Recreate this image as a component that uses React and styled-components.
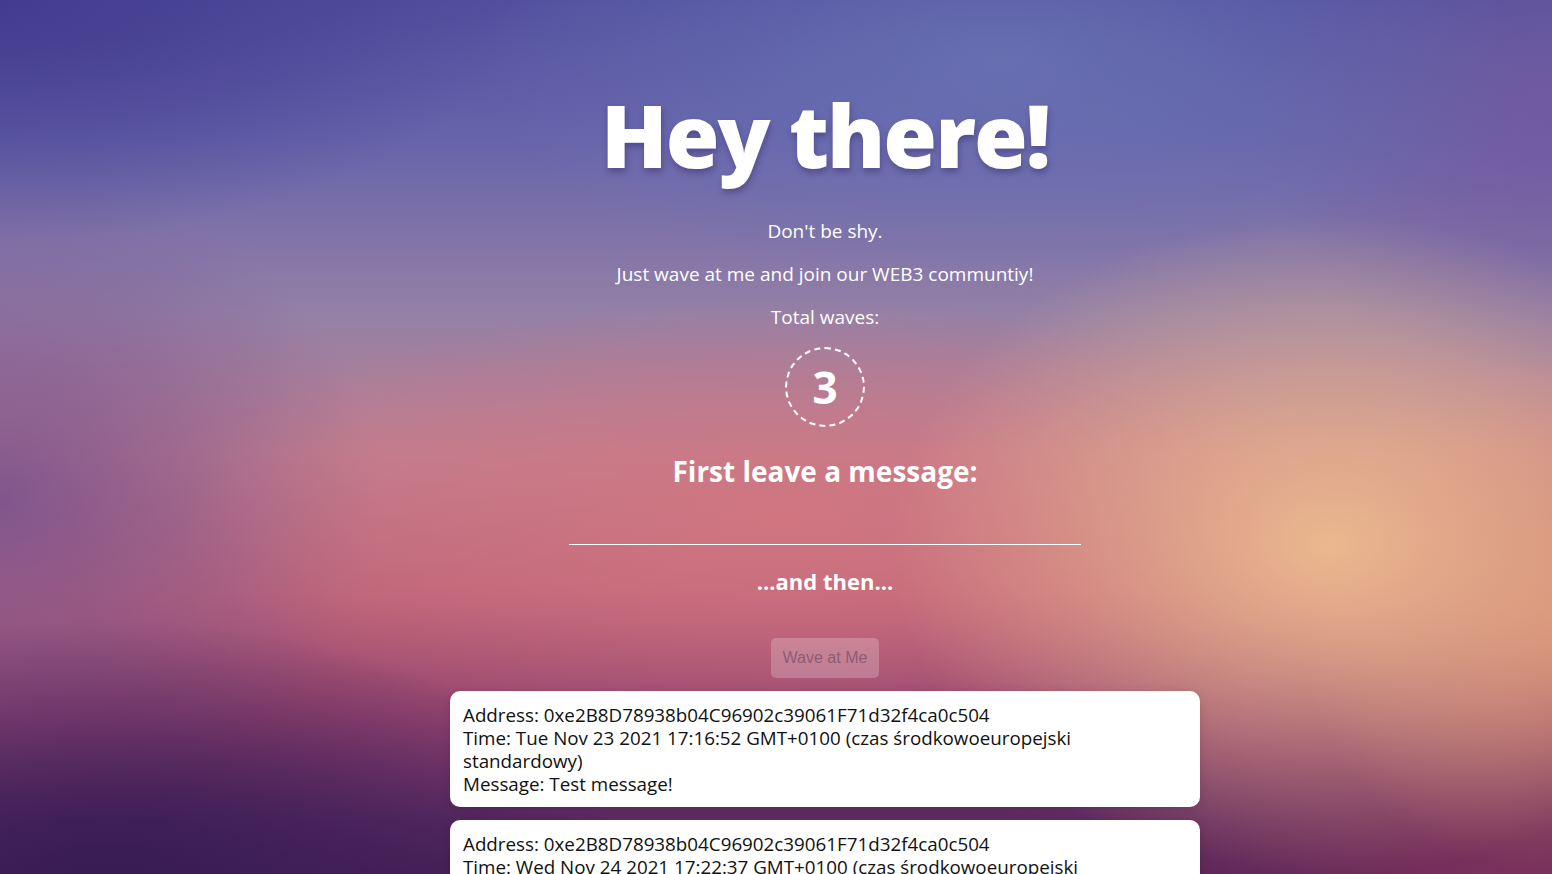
import React, { useState } from "react";
import styled, { createGlobalStyle } from "styled-components";

const GlobalStyle = createGlobalStyle`
  html, body {
    margin: 0;
    padding: 0;
    height: 100%;
  }
  body {
    font-family: "Open Sans", "Noto Sans", sans-serif;
    overflow: hidden;
  }
`;

const waves = [
  {
    address: "0xe2B8D78938b04C96902c39061F71d32f4ca0c504",
    time: "Tue Nov 23 2021 17:16:52 GMT+0100 (czas środkowoeuropejski standardowy)",
    message: "Test message!",
  },
  {
    address: "0xe2B8D78938b04C96902c39061F71d32f4ca0c504",
    time: "Wed Nov 24 2021 17:22:37 GMT+0100 (czas środkowoeuropejski standardowy)",
    message: "Hello!",
  },
];

const App = () => {
  const [message, setMessage] = useState("");

  return (
    <Page>
      <GlobalStyle />
      <Main>
        <Header>Hey there!</Header>
        <Bio>Don't be shy.</Bio>
        <Bio>Just wave at me and join our WEB3 communtiy!</Bio>
        <Bio>Total waves:</Bio>
        <Counter>3</Counter>
        <SubHeader>First leave a message:</SubHeader>
        <MessageInput
          type="text"
          value={message}
          onChange={(e) => setMessage(e.target.value)}
        />
        <Then>...and then...</Then>
        <WaveButton type="button" disabled={!message}>
          Wave at Me
        </WaveButton>
        {waves.map((wave, i) => (
          <Card key={i}>
            <div>Address: {wave.address}</div>
            <div>Time: {wave.time}</div>
            <div>Message: {wave.message}</div>
          </Card>
        ))}
      </Main>
    </Page>
  );
};

// blurred sunset photo, rebuilt from soft gradient layers
const Page = styled.div`
  width: 100%;
  height: 874px;
  overflow: hidden;
  background:
    radial-gradient(ellipse 440px 330px at 1330px 545px, rgba(234, 184, 142, 1), rgba(234, 184, 142, 0) 100%),
    radial-gradient(ellipse 260px 260px at 1560px 620px, rgba(214, 140, 110, 0.8), rgba(214, 140, 110, 0) 100%),
    radial-gradient(ellipse 520px 260px at 110px 880px, rgba(56, 28, 84, 1), rgba(56, 28, 84, 0) 100%),
    radial-gradient(ellipse 520px 240px at 1500px 880px, rgba(128, 50, 92, 0.9), rgba(128, 50, 92, 0) 100%),
    radial-gradient(ellipse 520px 240px at 0px 0px, rgba(66, 58, 142, 0.95), rgba(66, 58, 142, 0) 100%),
    radial-gradient(ellipse 520px 230px at 1000px 60px, rgba(106, 116, 180, 0.8), rgba(106, 116, 180, 0) 100%),
    radial-gradient(ellipse 300px 260px at 1552px 120px, rgba(116, 90, 158, 0.8), rgba(116, 90, 158, 0) 100%),
    radial-gradient(ellipse 600px 220px at 780px 520px, rgba(212, 118, 128, 0.8), rgba(212, 118, 128, 0) 100%),
    radial-gradient(ellipse 380px 320px at 0px 500px, rgba(118, 80, 142, 0.85), rgba(118, 80, 142, 0) 100%),
    linear-gradient(180deg, #52509e 0%, #6764ab 16%, #9580a6 36%, #c07e8e 52%, #bd6479 68%, #93436f 82%, #5a2a62 94%, #4a2258 100%);
`;

const Main = styled.main`
  display: flex;
  flex-direction: column;
  align-items: center;
  padding: 80px 0 0 98px;
  color: #fff;
`;

const Header = styled.h1`
  margin: 0;
  font-family: "Open Sans", sans-serif;
  font-weight: 800;
  font-size: 87px;
  line-height: 108px;
  letter-spacing: -2px;
  text-shadow: 1px 4px 6px rgba(40, 20, 80, 0.35);
`;

const Bio = styled.p`
  margin: 31px 0 0;
  font-size: 19px;
  line-height: 24px;
  & + & {
    margin-top: 19px;
  }
`;

const Counter = styled.div`
  display: flex;
  align-items: center;
  justify-content: center;
  box-sizing: border-box;
  width: 80px;
  height: 80px;
  margin-top: 18px;
  border: 2px dashed #fff;
  border-radius: 50%;
  font-size: 44px;
  font-weight: 700;
`;

const SubHeader = styled.h2`
  margin: 24px 0 0;
  font-size: 28px;
  font-weight: 700;
  line-height: 40px;
`;

const MessageInput = styled.input`
  box-sizing: border-box;
  width: 512px;
  height: 40px;
  margin-top: 14px;
  border: none;
  border-bottom: 1px solid #fff;
  background: transparent;
  color: #fff;
  font-family: inherit;
  font-size: 18px;
  outline: none;
`;

const Then = styled.h3`
  margin: 20px 0 0;
  font-size: 22px;
  font-weight: 700;
  line-height: 32px;
`;

const WaveButton = styled.button`
  width: 108px;
  height: 40px;
  margin-top: 41px;
  border: none;
  border-radius: 5px;
  background: rgba(255, 255, 255, 0.22);
  color: rgba(90, 60, 90, 0.55);
  font-family: "Liberation Sans", Arial, sans-serif;
  font-size: 16px;
`;

const Card = styled.div`
  box-sizing: border-box;
  width: 750px;
  margin-top: 13px;
  padding: 13px 13px 11px;
  border-radius: 10px;
  background: #fff;
  box-shadow: 0 2px 10px rgba(40, 10, 40, 0.15);
  color: #111;
  font-size: 18.8px;
  line-height: 23px;
`;

export default App;
